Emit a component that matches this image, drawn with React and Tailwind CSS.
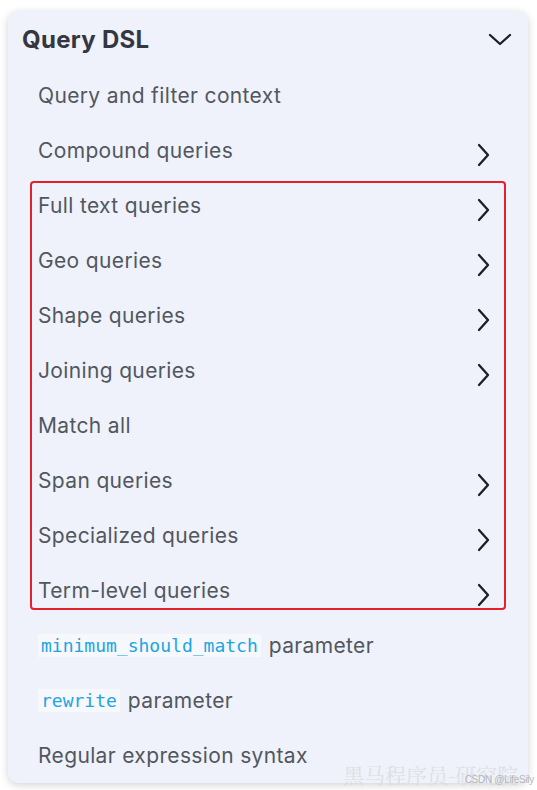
import React from "react";

const items = [
  { label: "Query and filter context", arrow: false },
  { label: "Compound queries", arrow: true },
];

const boxed = [
  { label: "Full text queries", arrow: true },
  { label: "Geo queries", arrow: true },
  { label: "Shape queries", arrow: true },
  { label: "Joining queries", arrow: true },
  { label: "Match all", arrow: false },
  { label: "Span queries", arrow: true },
  { label: "Specialized queries", arrow: true },
  { label: "Term-level queries", arrow: true },
];

function ChevronRight() {
  return (
    <svg width="14" height="24" viewBox="0 0 14 24" fill="none" className="mt-[9px]">
      <polyline points="2,2 11,12 2,22" stroke="#1d1e24" strokeWidth="2.3" strokeLinecap="round" strokeLinejoin="round" />
    </svg>
  );
}

function ChevronDown() {
  return (
    <svg width="24" height="14" viewBox="0 0 24 14" fill="none">
      <polyline points="2,2 12,11 22,2" stroke="#1d1e24" strokeWidth="2.3" strokeLinecap="round" strokeLinejoin="round" />
    </svg>
  );
}

function Row({ children, arrow }) {
  return (
    <div className="h-[55px] flex items-center justify-between pl-[30px] pr-[37px]">
      <div className="flex items-center text-[21px] tracking-[0.35px] text-[#52575f]">{children}</div>
      {arrow && <ChevronRight />}
    </div>
  );
}

function Code({ children }) {
  return (
    <code
      className="bg-[#f6f8fc] px-[3px] h-[23px] flex items-center text-[18px] tracking-normal text-[#1ba6e2] mr-[8px]"
      style={{ fontFamily: "'DejaVu Sans Mono', monospace" }}
    >
      {children}
    </code>
  );
}

export default function App() {
  return (
    <div className="min-h-[790px] bg-white pt-[11px] pl-[8px]" style={{ fontFamily: "Inter, 'Noto Sans', sans-serif" }}>
      <div className="relative w-[520px] h-[772px] rounded-[10px] bg-[#eff2fa] shadow-[0_2px_8px_rgba(0,0,0,0.18)]">
        {/* header */}
        <div className="h-[57px] flex items-center justify-between pl-[14px] pr-[16px]">
          <h2 className="text-[24px] font-bold text-[#343741] tracking-[0.3px]">Query DSL</h2>
          <ChevronDown />
        </div>

        {items.map((it) => (
          <Row key={it.label} arrow={it.arrow}>{it.label}</Row>
        ))}
        {boxed.map((it) => (
          <Row key={it.label} arrow={it.arrow}>{it.label}</Row>
        ))}

        <Row>
          <Code>minimum_should_match</Code>
          parameter
        </Row>
        <Row>
          <Code>rewrite</Code>
          parameter
        </Row>
        <Row>Regular expression syntax</Row>

        {/* red annotation box */}
        <div className="absolute left-[22px] top-[170px] w-[476px] h-[429px] border-2 border-[#e3202b] rounded-[4px]" />

        {/* watermark */}
        <div
          className="absolute left-[335px] top-[748px] text-[21px] text-[#d9dbe0] opacity-80 whitespace-nowrap"
          style={{ fontFamily: "'Noto Serif CJK SC', 'Noto Sans CJK SC', serif" }}
        >
          黑马程序员-研究院
        </div>
        <div
          className="absolute right-[-6px] top-[761px] text-[10px] tracking-[-0.3px] text-[#b3b6bd] whitespace-nowrap"
          style={{ fontFamily: "'Liberation Sans', sans-serif" }}
        >
          CSDN @LifeSily
        </div>
      </div>
    </div>
  );
}
